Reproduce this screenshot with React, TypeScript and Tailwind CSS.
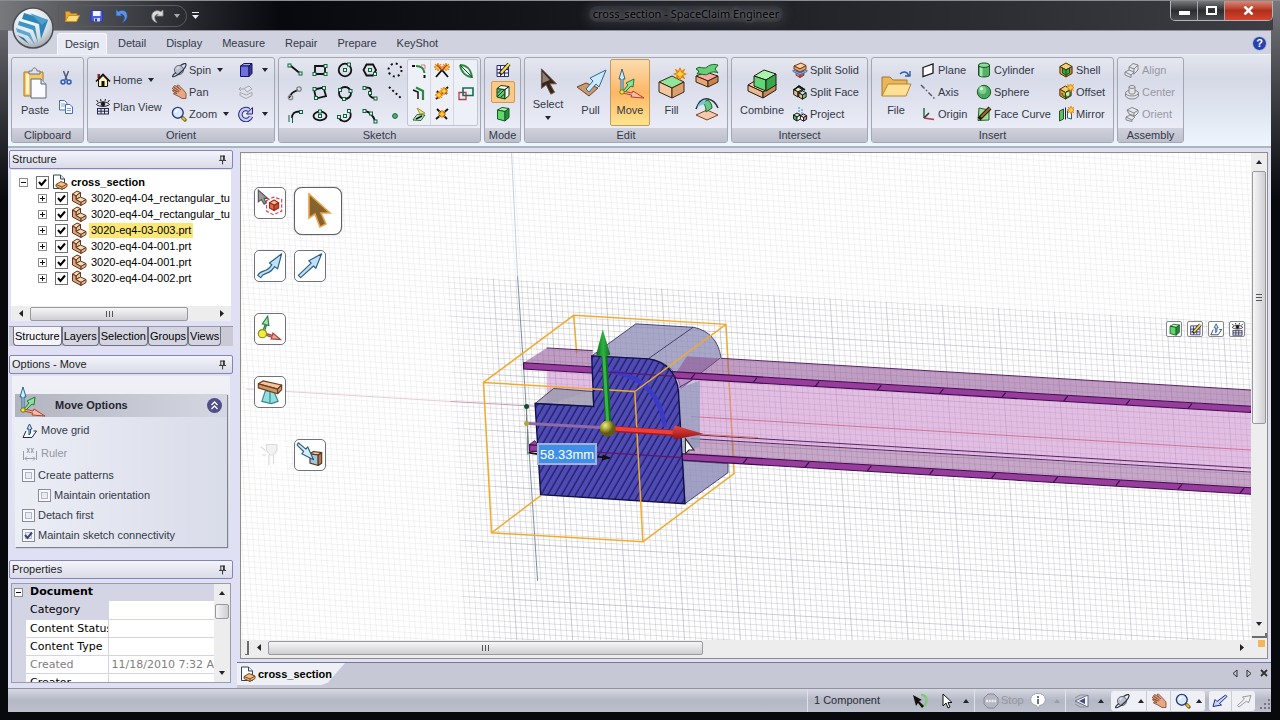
import type { ReactNode } from "react";
import { clsx } from "clsx";

type BoxProps = { x: number; y: number; r: number; top: string; left: string; right: string; stroke?: string };

// isometric box, (x, y) is the corner where the three faces meet
function Box({ x, y, r, top, left, right, stroke = "#1c1c1c" }: BoxProps) {
    const w = r * 0.87;
    const h = r / 2;
    return (
        <g stroke={stroke} strokeLinejoin="round">
            <polygon fill={top} points={`${x},${y} ${x + w},${y - h} ${x},${y - r} ${x - w},${y - h}`} />
            <polygon fill={left} points={`${x},${y} ${x - w},${y - h} ${x - w},${y + h} ${x},${y + r}`} />
            <polygon fill={right} points={`${x},${y} ${x + w},${y - h} ${x + w},${y + h} ${x},${y + r}`} />
        </g>
    );
}

function Node({ x, y }: { x: number; y: number }) {
    return <rect x={x - 1.5} y={y - 1.5} width="3" height="3" fill="#dff5e6" stroke="#14613f" />;
}

const star = (x: number, y: number) => (
    <path stroke="#e88200" fill="#ffd24a" strokeWidth=".8" transform={`translate(${x} ${y})`} d="M0 -4 L1 -1.4 3 -3 1.6 -.8 4 0 1.6 1 3 3 1 1.6 0 4 -1 1.6 -3 3 -1.6 1 -4 0 -1.6 -.8 -3 -3 -1 -1.4Z" />
);

const icons: Record<string, ReactNode> = {
    open: (
        <g strokeLinejoin="round">
            <path fill="#e9a92e" stroke="#b27a1c" d="M1.5 13.5v-10h4l1.500 2h6v3" />
            <path fill="#ffd97a" stroke="#c98f22" d="M1.500 13.500 4.500 7.500h11l-3 6z" />
        </g>
    ),
    save: (
        <g>
            <path fill="#4d5fe0" stroke="#2d3bb0" d="M2 2.500h11.500v11h-11.500z" />
            <path fill="#f4f6ff" d="M4 3h7.500v5H4z" />
            <path fill="#cfd6ff" d="M5 10h6v3.500H5z" /><path fill="#2d3bb0" d="M6 10.500h2v3H6z" />
        </g>
    ),
    undo: <path fill="#5f93df" stroke="#27509c" strokeWidth=".8" d="M2 8V1.500l2.500 2C8 1 13 2.500 13.300 7.500 13.500 11 11 14 8 14.500 10.500 12 11 9 9.500 7.300 8.500 6 7.300 6 6.500 6.300L8.500 8z" />,
    redo: <path fill="#dcdcdc" stroke="#8e8e8e" strokeWidth=".8" d="M14 8V2l-2.200 1.800C8.500 1.500 3 3 2.800 8 2.600 11.500 5 14 8 14.500 5.500 12 5 9 6.500 7.300 7.500 6.200 8.700 6 9.500 6.300L7.500 8z" />,
    cut: (
        <g fill="none" stroke="#2b5bb8" strokeWidth="1.500">
            <path stroke="#4c5a70" d="M5.500 1 9 10M10.500 1 7 10" />
            <circle cx="5" cy="12" r="2" /><circle cx="11" cy="12" r="2" />
        </g>
    ),
    copy: (
        <g fill="#f7faff" stroke="#4a6db5">
            <path d="M1.500 1.500h5l2.500 2.500v7h-7.500z" /><path d="M7.500 5.500h4.500l2.500 2.500v6.500h-7z" />
            <path stroke="#86a6df" d="M3 5h4M3 7h4M9 9.500h4M9 11.500h4" />
        </g>
    ),
    home: (
        <g>
            <path fill="#8c2222" d="M2.500 2h2.500v4H2.500z" />
            <path fill="#fdf3b5" stroke="#111" d="M3.500 8v6.500h9V8L8 3.500z" />
            <path fill="none" stroke="#111" strokeWidth="1.600" d="M1 9.500 8 2.500l7 7" />
            <path fill="#111" d="M6.500 9h3v5.500h-3z" />
        </g>
    ),
    plan: (
        <g fill="none" stroke="#16161e">
            <path d="M1.500 5.500C4 2 12 2 14.500 5.500 12 8 4 8 1.500 5.500M3 3 1.500 1M6 2 5.500 0M10 2l.5-2M13 3l1.500-2" />
            <circle cx="8" cy="5" r="1.800" fill="#16161e" />
            <path stroke="#26264d" d="M2.500 9v6M6 9v6M9.500 9v6M13.500 9v6M2 9.500h12M2 12.200h12M2 15h12" />
        </g>
    ),
    spin: (
        <g>
            <circle cx="8" cy="8" r="4.600" fill="#b9bcc9" stroke="#6a6f80" />
            <path fill="#e4e6ee" d="M5.500 6.500C6 5 8 4.500 9 5c-1 .5-2 1.500-2.500 3z" />
            <path fill="none" stroke="#2d3448" strokeWidth="1.200" d="M5 10.500C1 13.500.5 15.500 3.500 14.500 8 13 15 6 15 2.500 15 .5 12 1.800 9.500 3.500" />
        </g>
    ),
    pan: (
        <g stroke="#7c432c" strokeWidth=".8" strokeLinejoin="round">
            <path fill="#e6a783" d="M1 4.500 2.500 3.500 6 5.500 2.500 2.500 4 1.500 8 4.500 6 1.500 7.500 1 11.500 5l3.500 4v5.500h-4L7 12 2.500 10 3 8.800 6 9.500 1.500 7 2 6 6 7.500z" />
            <path fill="none" d="M6 5.500l2.500 1.500M8 4.500l2 1.500M6 7.500l2 .5" />
        </g>
    ),
    zoom: (
        <g>
            <path stroke="#8a6d16" strokeWidth="3.400" strokeLinecap="round" d="M11.500 11.500 14 14" /><path stroke="#edd04a" strokeWidth="1.400" d="M11.500 11.500 14 14" />
            <circle cx="6.800" cy="6.800" r="5.400" fill="#d9e9fb" stroke="#24407e" strokeWidth="1.400" />
            <path fill="#fff" d="M3.500 6C4 3.500 7 3 8.500 3.800 6.500 4.200 5.500 5.500 5 7z" />
        </g>
    ),
    views: (
        <g stroke="#17175a" strokeLinejoin="round">
            <path fill="#a9a9f4" d="M2.500 4 6 1.500h8L11 4z" /><path fill="#6f6fe0" d="M2.500 4H11v10.500H2.500z" /><path fill="#38389c" d="M11 4l3-2.500v10L11 14.500z" />
        </g>
    ),
    prevView: (
        <g fill="#e3e4ea" stroke="#a3a6b0">
            <path d="M2 8.500 8 11l6-2.500v3L8 14.500 2 11.500z" /><path d="M6 4.500 11 2l3 3-5 3z" /><path d="M1 5h5M3 3 1 5l2 2" />
        </g>
    ),
    rotate: (
        <g fill="none">
            <path stroke="#26267c" strokeWidth="4.500" d="M13 10.500A5.500 5.500 0 1 1 11 4" />
            <path fill="#c7cdf6" stroke="#26267c" d="M14.500 1.500v6.500h-6z" />
            <path stroke="#c7cdf6" strokeWidth="2.500" d="M13 10.500A5.500 5.500 0 1 1 11 4" />
        </g>
    ),
    line: <g><path stroke="#111" strokeWidth="1.800" d="M4 4 12 10.500" /><Node x={2.500} y={3.500} /><Node x={13.500} y={11.500} /></g>,
    rect: <g><path fill="none" stroke="#111" strokeWidth="1.800" d="M3 4h10v8H3z" /><Node x={2.500} y={12} /><Node x={13.500} y={4} /><Node x={13.500} y={12} /></g>,
    circle: <g><circle cx="8" cy="8" r="6.300" fill="none" stroke="#111" strokeWidth="1.800" /><Node x={8} y={8} /><Node x={12} y={2.500} /></g>,
    polygon: <g><path fill="none" stroke="#111" strokeWidth="1.800" d="M4.500 2.500h6.500l3 5.500-3 5.500H4.500L1.500 8z" /><Node x={8} y={8} /><Node x={13} y={12} /></g>,
    dashCircle: <circle cx="8" cy="8" r="6.500" fill="none" stroke="#111" strokeWidth="2" strokeDasharray="2 3.100" />,
    tangent: <g fill="none"><path stroke="#111" strokeWidth="1.800" d="M2 13C4 8 6 7 11 5" /><circle cx="3.500" cy="12.500" r="2.200" stroke="#888" strokeWidth="1.300" /><circle cx="12" cy="4" r="2.200" stroke="#888" strokeWidth="1.300" /></g>,
    rect3: <g><path fill="none" stroke="#111" strokeWidth="1.800" d="M2 4.500 11.500 2.500 14 11 4 13.500z" /><Node x={2.500} y={4} /><Node x={12} y={3} /><Node x={4} y={13} /></g>,
    circle3: <g><circle cx="8" cy="8" r="6" fill="none" stroke="#111" strokeWidth="1.800" /><Node x={3} y={5} /><Node x={13.500} y={6} /><Node x={7} y={14} /></g>,
    spline: <g><path fill="none" stroke="#111" strokeWidth="1.800" d="M3 3c5-1 7 1 5 4s1 6 5 6" /><Node x={2.500} y={3} /><Node x={8} y={8} /><Node x={13.500} y={13.500} /></g>,
    dashLine: <path stroke="#111" strokeWidth="2" strokeDasharray="2 2.600" d="M2 2 15 14" />,
    sweepArc: <g><path fill="none" stroke="#111" strokeWidth="1.800" d="M5 10C5 5 8 3.500 13 3.500" /><path stroke="#14613f" d="M2 7v7M5.500 9v6" /><Node x={14} y={4} /></g>,
    ellipse: <g><ellipse cx="8" cy="8" rx="6.500" ry="4.300" fill="none" stroke="#111" strokeWidth="1.800" /><Node x={8} y={8} /><Node x={8} y={3.500} /></g>,
    arc3: <g><path fill="none" stroke="#111" strokeWidth="1.800" d="M13 4a6 6 0 1 1-11 6" /><Node x={8} y={8} /><Node x={2} y={9} /><Node x={12} y={3} /></g>,
    curve: <g><path fill="none" stroke="#111" strokeWidth="1.800" d="M3 3c5 1 8 4 10 10" /><Node x={2.500} y={3} /><Node x={9} y={5.500} /><Node x={13.500} y={13.500} /></g>,
    point: <circle cx="8" cy="8" r="2.400" fill="#55b06d" stroke="#14613f" />,
    fillet: <g fill="none" strokeWidth="2"><path stroke="#2c8a43" d="M5 3c5 0 8 2 8.500 7" /><path stroke="#111" d="M1 3h3M13.500 12v3" /><path stroke="#d77" strokeWidth="1" d="M10 2h4v4" /></g>,
    offsetCurve: <g fill="none"><path stroke="#111" strokeWidth="1.500" d="M2 5l5 2v7" /><path stroke="#2c8a43" strokeWidth="2.200" d="M5 2.500 12 6v9" /></g>,
    projectSketch: <g><path fill="#e9e28c" stroke="#a09a30" d="M6 2l8 5-5 1z" /><path fill="#bfe8c2" stroke="#246b36" d="M2 14 6 8.500l8 .5-4 5.500z" /><path stroke="#111" strokeWidth="1.400" d="M5 13l6-3" /></g>,
    trim: <g><path stroke="#111" strokeWidth="1.800" d="M2 14 8 7l6 7" fill="none" />{star(4, 4)}{star(12, 4)}<path stroke="#c33a12" strokeWidth="1.400" d="M3 2l5 5 5-5" fill="none" /></g>,
    split: <g><path stroke="#111" strokeWidth="1.800" d="M2 14 14 2M3 6l4 4M9 5l4 4" />{star(5, 10)}{star(10, 6)}</g>,
    corner: <g><path stroke="#111" strokeWidth="1.800" d="M2 13 14 3M3 3l10 10" />{star(8, 8)}</g>,
    bend: <g fill="none" stroke="#2c8a43" strokeWidth="1.800"><path d="M2 2c6 0 11 4 12 12C8 14 3 9 2 2" /><path stroke="#164c24" strokeWidth="1" d="M2 2l12 12" /></g>,
    scale: <g fill="none"><path stroke="#b23d4e" strokeWidth="1.300" d="M1 7.500h7v7H1z" /><path stroke="#186b52" strokeWidth="1.600" d="M5 3h10v7.500H5z" /></g>,
    sketchMode: (
        <g>
            <path fill="#eef0ff" stroke="#2b2b66" d="M2 3.500h11.500v11H2z" /><path stroke="#2b2b66" d="M5.500 4v10M9.500 4v10M2 7.500h11M2 11h11" />
            <path stroke="#1e1e1e" strokeWidth="4" d="M5 12 14 2" /><path stroke="#f2dc4d" strokeWidth="2.400" d="M6 11l8-9" />
        </g>
    ),
    sectionMode: (
        <g>
            <path fill="#5fc96f" stroke="#123b1b" d="M2 4.500 10 5.500V15L2 13z" />
            <path fill="#fff" stroke="#123b1b" strokeLinejoin="round" d="M2 4.500 6 1.500l8 1-4 3zM14 2.500v9L10 15V5.500z" />
            <path stroke="#123b1b" d="M2.500 9 6 5.500M2.500 12.500 9 6M5.500 13.500 9.500 10" />
        </g>
    ),
    solidMode: (
        <g stroke="#12581f" strokeLinejoin="round">
            <path fill="#b6f3b6" d="M2.500 4 7 1.500l7 1L10 5.500z" /><path fill="#5fd86c" d="M2.500 4 10 5.500V15L2.500 13z" /><path fill="#24913a" d="M14 2.500v9L10 15V5.500z" />
        </g>
    ),
    splitSolid: <g><Box x={8} y={11} r={4.500} top="#f4a0a0" left="#e67b7b" right="#b84f50" stroke="#8a3434" /><path fill="#a9cdf3" stroke="#4a77b5" d="M1 8l7 3 7-3v1.500L8 12.500 1 9.500z" /><path fill="#f8cfa6" stroke="#6d3d1c" d="M2 4 9 1l5 2.500-6 3.500z" /><path fill="#e3a273" stroke="#6d3d1c" d="M2 4v3l6 3 6-3V3.500L8 7z" /></g>,
    splitFace: <g><Box x={6} y={8} r={5} top="#d8efb4" left="#eab988" right="#b67a4c" /><Box x={10.500} y={11} r={4.200} top="#bfe0f5" left="#eab988" right="#7ebf6e" /><path stroke="#111" strokeWidth="1.600" d="M2 6l5-4 6 4" fill="none" /></g>,
    project: <g><path stroke="#3f8ad0" d="M7 1v8M10 3v5" strokeDasharray="2 1" /><Box x={5} y={11} r={4} top="#bdf0be" left="#47b95a" right="#fff" /><Box x={11.500} y={11.500} r={3.600} top="#f6c7d1" left="#fff" right="#e0859b" /></g>,
    plane: <path fill="#fff" stroke="#16161e" strokeWidth="1.300" d="M3 5.500 13 2v9L3 14.500z" />,
    axis: <path stroke="#585b68" strokeWidth="1.500" strokeDasharray="5 2 1.500 2" d="M1 1 15 15" />,
    origin: <g strokeWidth="1.600"><path stroke="#2a7b46" d="M4 2v10" /><path stroke="#333" d="M4 12 9 7" /><path stroke="#b13a48" d="M4 12l10 1.500" /></g>,
    cylinder: <g stroke="#1d4d26"><path fill="#57b267" d="M2.500 3v10c0 2.600 11 2.600 11 0V3z" /><path fill="#a5e6ac" stroke="none" d="M4 5h2.500v9.500L4 14z" /><ellipse cx="8" cy="3.200" rx="5.500" ry="2.200" fill="#8fdc98" /></g>,
    sphere: <g><circle cx="8" cy="8" r="6.700" fill="#4aa860" stroke="#1d5a2a" /><circle cx="6.500" cy="6" r="4" fill="#7fce8b" /><circle cx="5.500" cy="4.800" r="1.700" fill="#cff3d2" /></g>,
    faceCurve: <g><path fill="#9fdc96" stroke="#23622d" d="M3 2l10 2v10L2 14.500z" /><path stroke="#26190b" strokeWidth="4" d="M3 13 14 2" /><path stroke="#9a6b24" strokeWidth="2" d="M5 11l9-9" /></g>,
    shell: <g><Box x={8} y={8} r={7} top="#f6cf78" left="#dfa03c" right="#c78428" stroke="#4e3008" /><path fill="#3aa84c" stroke="#134f1d" d="M8 8l3.500-2v5L8 13l-3.500-2V6zM8 8v4" /></g>,
    offset: <g><Box x={7.500} y={8.500} r={6.500} top="#f6cf78" left="#dfa03c" right="#c78428" stroke="#4e3008" /><path fill="#bff0b6" stroke="#134f1d" d="M7.500 8.500 12 6.500v5L7.500 14z" /><path stroke="#134f1d" fill="none" d="M4 9c0 3 2 4 5 3" />{star(12.500, 3.500)}</g>,
    mirror: <g><path fill="#63bd5f" stroke="#1d5a2a" d="M1.500 5 5.500 3v10l-4 2z" /><path fill="#fff" stroke="#222" d="M7.500 1.500v12" /><path fill="#eef7f9" stroke="#25636b" d="M9.500 5l4-2v10l-4-1z" />{star(13, 4)}</g>,
    align: <g fill="#e6e6ea" stroke="#85878f" strokeLinejoin="round"><path d="M5 5 9 1.500l5 1.500v5l-4 4-5-1.500zM5 5l5 2 4-4M10 7v5" /><path d="M1 10 5 8l5 2-3 3zM1 10v3l6 2.500V13" /></g>,
    center: <g fill="#e4e4e8" stroke="#85878f"><path d="M1.500 9v3c2 4 11 4 13 0V9" /><ellipse cx="8" cy="9" rx="6.500" ry="3" /><path d="M5 3v6c1 1.500 5 1.500 6 0V3" /><ellipse cx="8" cy="3" rx="3" ry="1.500" /></g>,
    orient: <g fill="#e6e6ea" stroke="#85878f" strokeLinejoin="round"><path d="M3 4 8 1.500 14 4v3l-3 3-6-2zM3 4l7 3 4-3M10 7v3" /><path d="M2 11 6 9l5 2-3 3zM2 11v3l6 1.500V14" /></g>,
    doc: (
        <g>
            <path fill="#fff" stroke="#33415c" d="M1.500 1h7l4 4v9.500h-11z" /><path fill="#dfe6f5" stroke="#33415c" d="M8.500 1v4h4" />
            <path fill="#f2bb84" stroke="#7a481f" d="M4 10.500 9 7.500l6 2.500v2.500l-5 3-6-3z" /><path fill="none" stroke="#7a481f" d="M4 10.500l6 2.500 5-3M10 13v2.500" />
        </g>
    ),
    part: (
        <g stroke="#5a3420" strokeLinejoin="round">
            <path fill="#f6d6b6" d="M1.500 4 6 1l3.500 1.500L5 6z" />
            <path fill="#f0c59f" d="M5 6 9.500 2.500V7L5 9.500z" />
            <path fill="#f6d6b6" d="M5 9.500 9.500 7l5.500 2.500-5 3z" />
            <path fill="#dca47a" d="M1.500 4 5 6v3.500l5 3v3L1.500 11z" />
            <path fill="#efbd92" d="M10 12.500l5-3v3l-5 3z" />
        </g>
    ),
    moveGrid: <g><path fill="#f5f8ff" stroke="#222b3f" d="M4 8 1 14.500h9L14.500 8h-3" /><path fill="#cfe6f5" stroke="#24507c" d="M7 12V6H5L7.500 1 10 6H8.500v4z" /></g>,
    ruler: <g stroke="#9a9ca6"><path d="M1.500 5v9M14.500 5v9M3 12.500h10M5 10.500l-2 2 2 2M11 10.500l2 2-2 2" fill="none" /><path d="M5 2l2.500 5M7.500 2 5 7M9 2l2.500 5M11.500 2 9 7" /></g>,
    boxSelect: (
        <g>
            <path fill="#9b9b9b" stroke="#555" d="M2 1v10l2.500-2 2.500 4 1.500-1L7 8h3z" />
            <Box x={15.500} y={14} r={4.500} top="#f6bd92" left="#dc6e4e" right="#b94f35" stroke="#a02c1c" />
            <path fill="none" stroke="#e0444c" strokeDasharray="3 1.500" d="M9 10l6-3 7 2v10l-7 3-6-3z" />
        </g>
    ),
    bigCursor: <path fill="#86622c" stroke="#e9a14a" strokeWidth="1.600" d="M9 1v24l6-4 5 13 6-3-5-11h9z" />,
    curvedArrow: <path fill="#bfe0f5" stroke="#2b5f88" strokeLinejoin="round" d="M1.500 20c3-6 7-1 12-9l-2-1.500L22 1.500l-3.500 13-2.500-2c-5 8-9 4-12 9.500z" />,
    straightArrow: <path fill="#bfe0f5" stroke="#2b5f88" strokeLinejoin="round" d="M2 20 13 9.500l-2-2L22 1.500 17 14l-2-2L4 22z" />,
    anchor: (
        <g>
            <path fill="#a6e3b4" stroke="#2b7d46" d="M6 13 8 8 5.500 7.500 10 1l1 8-2-.5-1.500 5z" />
            <path fill="#f1a49b" stroke="#a1443c" d="M9 16l5 1.500.5-2L21 21l-8-.5.600-1.500-5-1.500z" />
            <circle cx="5.500" cy="16" r="3.500" fill="#f2ec3c" stroke="#8f8b16" />
        </g>
    ),
    fulcrum: (
        <g strokeLinejoin="round">
            <path fill="#93dfe0" stroke="#36898c" d="M8 11h7l4 9-6 2-8-2zM12 11v10" />
            <path fill="#f0c59f" stroke="#6d3d1c" d="M2 5 6 2.500 22 6l-3.500 3.500z" /><path fill="#d2966a" stroke="#6d3d1c" d="M2 5l16.500 4.500v4L2 8.500zM18.500 9.500 22 6v4l-3.500 3.500z" />
        </g>
    ),
    upTo: <g strokeLinejoin="round"><path fill="#f0c59f" stroke="#5d3a1e" d="M12 11l3-2 7 1-3 2z" /><path fill="#a6c6dc" stroke="#5d3a1e" d="M12 11l7 1v9l-7-2z" /><path fill="#b3794e" stroke="#5d3a1e" d="M22 10v9l-3 2v-9z" /><path fill="#d4eefa" stroke="#2b5f88" d="M2 1.500 8.500 7l1.500-2 5 11-10-5 1.500-2L1 3.500z" /></g>,
    ghost: <g stroke="#dcdcdc" fill="#f2f2f2"><path d="M9 3h9v5l-3 4h-3L9 8zM11 12v9M15 12v8" /><path d="M4 5l4 3M5 12h4" /></g>,
    selectBack: <g><path fill="none" stroke="#7fca75" strokeWidth="2.400" d="M8 2c7 0 7 9 2 11" /><path fill="#111" d="M0 2l9 5-3 1 5 5-2 2-4-5-2 3z" /></g>,
    pointer: <path fill="#fff" stroke="#111" d="M4 1v12l3-3 2 5 2-1-2-4.500h4z" />,
    stop: <g><path fill="#b5b7c2" stroke="#888b97" d="M5 1h6l4 4v6l-4 4H5l-4-4V5z" /><path stroke="#eee" strokeWidth="2.500" d="M3 8h10" strokeDasharray="2 .8" /></g>,
    info: <g><path fill="#fff" stroke="#a3a6b2" d="M8 .5a6.500 6 0 0 1 1.500 12L8 16l-1.500-3.500A6.500 6 0 0 1 8 .5" /><path stroke="#6c6f7c" strokeWidth="2" d="M8 3v2M8 6v5" /></g>,
    viewBack: <g><path fill="#f4f5fa" stroke="#6e7186" d="M1 8 14 2v12z" /><path fill="#444b8c" d="M5 8l6-3v6z" /><path stroke="#8b8ea0" fill="none" d="M1 5l5-3h6M1 11l5 3h6" /></g>,
    arrowBack: <path fill="#c9d5fb" stroke="#1f2d86" strokeLinejoin="round" d="M1 13.500 3 6.500l2 2L13.500 2 15 3.500 7.500 10.500l2 1.500z" />,
    arrowFwd: <path fill="#f2f2f2" stroke="#999" strokeLinejoin="round" d="M15 2.500 12.500 10l-2-2L3 14l-1.500-1.500L8.500 6l-2-2z" />,
    pin: <path fill="none" stroke="#1d1d1d" d="M5.500 3v5M9.500 3v5M5 3.500h5M3.500 8.500h8M7.500 9v4M8.500 3v5" />,
    // 32px icons
    paste: (
        <g strokeLinejoin="round">
            <path fill="#f4c968" stroke="#a3762a" d="M5 5h19v24H5z" /><path fill="#fff4cf" d="M7 7h3v20H7z" />
            <path fill="#dfe1e8" stroke="#70737f" d="M10 7V4h3c0-4 5-4 5 0h3v3z" />
            <path fill="#fbfcff" stroke="#5d6678" d="M12 12h10l5 5v14H12z" /><path fill="#d5daea" stroke="#5d6678" d="M22 12v5h5" />
        </g>
    ),
    select: <g><path fill="#3a2419" stroke="#6b5447" d="M9 3v21l5-4 5 10 4-2-5-9h7z" /><path fill="#c4bdb8" d="M10 6v12l8-3z" opacity=".6" /></g>,
    pull: <g strokeLinejoin="round"><path fill="#c99a6f" stroke="#704322" d="M2 20l9-4 12 5-9 8z" /><path fill="#cdeafa" stroke="#31668f" d="M11 22l7-8-3-3L31 3 24 20l-3-3-7 8z" /></g>,
    move: (
        <g strokeLinejoin="round">
            <path fill="#cdeafa" stroke="#2c668c" d="M7 24V12H5L8 2l3 10H9v12z" />
            <path fill="#8fe0a0" stroke="#1f7b37" d="M9 24l5-6-2-2 8-4-1 8-2-1-6 6z" />
            <path fill="#f8b9a6" stroke="#b0432e" d="M9 24l9 2 1-2L30 31l-13-1 .6-2L9 26z" />
            <circle cx="8" cy="25" r="2.200" fill="#f3e63c" stroke="#7b7415" />
        </g>
    ),
    fill: (
        <g strokeLinejoin="round" stroke="#3c2414">
            <path fill="#8ee59b" d="M3 15 16 9l12 6-12 6z" /><path fill="#f2c7a2" d="M3 15l13 6v10L3 25z" /><path fill="#dca06f" d="M28 15 16 21v10l12-6z" />
            <g transform="translate(24 7) scale(1.500)">{star(0, 0)}</g>
        </g>
    ),
    blend: (
        <g strokeLinejoin="round" stroke="#3c2414">
            <path fill="#f8a9a4" d="M3 15l10-4 12 4-10 5z" /><path fill="#e3a878" d="M3 15l12 5v6L3 21z" /><path fill="#c9834f" d="M25 15 15 20v6l10-5z" />
            <path fill="#67cf76" stroke="#17602a" d="M3 8c4-4 7 1 11-2s7-3 11-2l-3 4 3 4c-4-2-7-1-10 1s-8-1-11 0l2-3z" />
        </g>
    ),
    tweak: (
        <g strokeLinejoin="round">
            <path fill="#f6c9ac" stroke="#7d4427" d="M3 21 14 16l11 5-11 5z" />
            <path fill="none" stroke="#23323f" strokeWidth="1.500" d="M3 15C6 7 10 4 15 5s8 4 10 9" />
            <path fill="#66c985" stroke="#175f2c" d="M14 6c3 1 5 4 5 8l-6 4c0-5-1-7-3-9z" /><path fill="#7ac6dd" d="M4 13c2-4 4-6 7-7l2 3z" />
        </g>
    ),
    combine: (
        <g stroke="#221a14" strokeLinejoin="round">
            <path fill="#f6d3b2" d="M2 18 12 12l18 5-13 8z" /><path fill="#eab98e" d="M2 18l15 7v6L2 24z" /><path fill="#c98956" d="M30 17l-13 8v6l13-8z" />
            <path fill="#a9f5b0" d="M8 9 18 3l12 4-10 6z" /><path fill="#60d674" d="M8 9l12 4v11L8 19z" /><path fill="#35a74b" d="M30 7v11l-10 6V13z" />
        </g>
    ),
    file: <g strokeLinejoin="round"><path fill="#e9b65c" stroke="#a3762a" d="M2 29V10h8l3 3h14v7" /><path fill="#ffdf94" stroke="#b8862f" d="M2 29l6-12h23l-5 12z" /><path fill="none" stroke="#2f5da8" strokeWidth="1.400" d="M20 7c3-3 7-3 9 2M30 4v5h-5" /></g>,
};

function Icon({ name, size = 16, box = 16, className }: { name: string; size?: number; box?: number; className?: string }) {
    return (
        <svg width={size} height={size} viewBox={`0 0 ${box} ${box}`} className={clsx("shrink-0", className)} aria-hidden="true">
            {icons[name]}
        </svg>
    );
}

function Caret({ up, dim }: { up?: boolean; dim?: boolean }) {
    return (
        <svg width="6" height="4" viewBox="0 0 6 4" className="shrink-0" aria-hidden="true">
            <path fill={dim ? "#9a9daa" : "#23252e"} d={up ? "M0 4 3 0l3 4z" : "M0 0h6L3 4z"} />
        </svg>
    );
}

function Group({ label, className, children }: { label: string; className: string; children: ReactNode }) {
    return (
        <section aria-label={label} className={clsx("flex h-[86px] shrink-0 flex-col rounded-[3px] border border-[#a4a6b4] bg-linear-to-b from-[#e5e7f0] via-[#d8dbe8] via-25% to-[#eff1fb]", className)}>
            <div className="flex h-[70px] pt-px">{children}</div>
            <div className="flex h-[14px] items-center justify-center bg-linear-to-b from-[#cfd1dc] to-[#bdbfcc] leading-[14px]">{label}</div>
        </section>
    );
}

function Small({ icon, label, caret, dim }: { icon: string; label: string; caret?: boolean; dim?: boolean }) {
    return (
        <button className={clsx("flex h-[22px] items-center gap-[2px] whitespace-nowrap", dim && "text-[#9698a3]")}>
            <Icon name={icon} />
            <span>{label}</span>
            {caret && <span className="ml-[4px]"><Caret /></span>}
        </button>
    );
}

function Large({ icon, label, className, active, caret }: { icon: string; label: string; className: string; active?: boolean; caret?: boolean }) {
    return (
        <button className={clsx("flex h-[67px] flex-col items-center rounded-[2px] border", caret ? "gap-px pt-[6px]" : "gap-[4px] pt-[7px]", active ? "border-[#c49a5c] bg-linear-to-b from-[#fbdcae] via-[#fcb765] via-50% to-[#fee48f]" : "border-transparent", className)}>
            <Icon name={icon} size={caret ? 30 : 32} box={32} />
            <span className="leading-[14px]">{label}</span>
            {caret && <span className="mt-[4px]"><Caret /></span>}
        </button>
    );
}

const sketchTools = [
    ["line", "rect", "circle", "polygon", "dashCircle"],
    ["tangent", "rect3", "circle3", "spline", "dashLine"],
    ["sweepArc", "ellipse", "arc3", "curve", "point"],
];
const sketchEdit = [
    ["fillet", "offsetCurve", "projectSketch"],
    ["trim", "split", "corner"],
    ["bend", "scale"],
];

function Ribbon() {
    return (
        <div className="flex h-[94px] shrink-0 gap-[3px] border-t border-b-2 border-t-[#eef0f6] border-b-[#a9b6bb] bg-linear-to-b from-[#e3e6ef] via-[#d4d8e5] via-25% to-[#edf5fd] px-[3px] pt-[2px]">
            <Group label="Clipboard" className="w-[73px]">
                <Large icon="paste" label="Paste" className="w-[46px]" />
                <div className="flex flex-col gap-[13px] pt-[11px]">
                    <button aria-label="Cut"><Icon name="cut" /></button>
                    <button aria-label="Copy"><Icon name="copy" /></button>
                </div>
            </Group>
            <Group label="Orient" className="w-[188px]">
                <div className="flex w-[80px] flex-col gap-[5px] pt-[10px] pl-[7px]">
                    <Small icon="home" label="Home" caret />
                    <Small icon="plan" label="Plan View" />
                </div>
                <div className="flex w-[70px] flex-col pl-[3px]">
                    <Small icon="spin" label="Spin" caret />
                    <Small icon="pan" label="Pan" />
                    <Small icon="zoom" label="Zoom" caret />
                </div>
                <div className="flex flex-col">
                    <button aria-label="Views" className="flex h-[22px] items-center gap-[8px]"><Icon name="views" /><Caret /></button>
                    <button aria-label="Previous view" className="flex h-[22px] items-center"><Icon name="prevView" /></button>
                    <button aria-label="Rotate" className="flex h-[22px] items-center gap-[8px]"><Icon name="rotate" /><Caret /></button>
                </div>
            </Group>
            <Group label="Sketch" className="w-[203px]">
                <div className="grid grid-cols-5 pl-[3px]">
                    {sketchTools.flat().map((t) => (
                        <button key={t} aria-label={t} className="flex h-[22px] w-[25px] items-center justify-center"><Icon name={t} /></button>
                    ))}
                </div>
                <div className="flex h-[67px] divide-x divide-[#d3d5e0] rounded-[2px] border border-[#c3c5d0] bg-[#eef0f8]">
                    {sketchEdit.map((col) => (
                        <div key={col[0]} className="flex w-[23px] flex-col">
                            {col.map((t) => <button key={t} aria-label={t} className="flex h-[22px] items-center justify-center"><Icon name={t} /></button>)}
                        </div>
                    ))}
                </div>
            </Group>
            <Group label="Mode" className="w-[37px]">
                <div className="flex w-full flex-col items-center">
                    <button aria-label="Sketch mode" className="flex h-[22px] w-[24px] items-center justify-center"><Icon name="sketchMode" /></button>
                    <button aria-label="Section mode" className="flex h-[22px] w-[24px] items-center justify-center rounded-[2px] border border-[#d39a4c] bg-[#fdc988]"><Icon name="sectionMode" /></button>
                    <button aria-label="3D mode" className="flex h-[22px] w-[24px] items-center justify-center"><Icon name="solidMode" /></button>
                </div>
            </Group>
            <Group label="Edit" className="w-[204px]">
                <Large icon="select" label="Select" caret className="w-[46px]" />
                <Large icon="pull" label="Pull" className="w-[39px]" />
                <Large icon="move" label="Move" active className="w-[40px]" />
                <Large icon="fill" label="Fill" className="w-[43px]" />
                <div className="flex flex-col gap-[5px] pt-[2px]">
                    <button aria-label="Blend"><Icon name="blend" size={28} box={28} /></button>
                    <button aria-label="Tweak"><Icon name="tweak" size={28} box={28} /></button>
                </div>
            </Group>
            <Group label="Intersect" className="w-[137px]">
                <Large icon="combine" label="Combine" className="w-[60px]" />
                <div className="flex flex-col">
                    <Small icon="splitSolid" label="Split Solid" />
                    <Small icon="splitFace" label="Split Face" />
                    <Small icon="project" label="Project" />
                </div>
            </Group>
            <Group label="Insert" className="w-[243px]">
                <Large icon="file" label="File" className="w-[48px]" />
                <div className="flex w-[56px] flex-col">
                    <Small icon="plane" label="Plane" />
                    <Small icon="axis" label="Axis" />
                    <Small icon="origin" label="Origin" />
                </div>
                <div className="flex w-[82px] flex-col">
                    <Small icon="cylinder" label="Cylinder" />
                    <Small icon="sphere" label="Sphere" />
                    <Small icon="faceCurve" label="Face Curve" />
                </div>
                <div className="flex flex-col">
                    <Small icon="shell" label="Shell" />
                    <Small icon="offset" label="Offset" />
                    <Small icon="mirror" label="Mirror" />
                </div>
            </Group>
            <Group label="Assembly" className="w-[67px]">
                <div className="flex flex-col pl-[6px]">
                    <Small icon="align" label="Align" dim />
                    <Small icon="center" label="Center" dim />
                    <Small icon="orient" label="Orient" dim />
                </div>
            </Group>
        </div>
    );
}

function Logo() {
    return (
        <svg width="42" height="42" viewBox="0 0 42 42" className="absolute top-[7px] left-[12px] z-10" aria-label="SpaceClaim">
            <defs>
                <radialGradient id="orb" cx=".4" cy=".25" r=".9"><stop offset="0" stopColor="#fff" /><stop offset=".6" stopColor="#d5dbe1" /><stop offset="1" stopColor="#7f858c" /></radialGradient>
            </defs>
            <circle cx="21" cy="21" r="20" fill="url(#orb)" stroke="#4b4f55" strokeWidth="1.500" />
            <path fill="#2a86b8" d="M12 6l24 7-7 19-2-15-17-5z" />
            <path fill="#4f9ecb" d="M18 6l18 7-6 5z" />
            <path fill="#3b95c6" d="M7 14l16 5 3 17-5-13-15-5z" />
            <path fill="#58a9d3" d="M4 21l14 5 5 12-7-9-11-4z" />
            <path fill="#2a6f9f" d="M5 28l7 3 5 6-7-5z" />
        </svg>
    );
}

function TitleBar() {
    return (
        <header className="flex h-[29px] items-start bg-linear-to-r from-[#77797c] via-[#07090f] via-22% to-[#3c3e43]">
            <div className="flex h-[29px] w-[202px] shrink-0 items-center pl-[58px]">
                <div className="flex h-[22px] items-center gap-[9px] rounded-r-full border border-[#5a5b5f] pr-[6px] pl-[5px]">
                    <button aria-label="Open"><Icon name="open" /></button>
                    <button aria-label="Save"><Icon name="save" /></button>
                    <button aria-label="Undo"><Icon name="undo" /></button>
                    <button aria-label="Redo" className="ml-[10px]"><Icon name="redo" /></button>
                    <svg width="6" height="4" viewBox="0 0 6 4" aria-hidden="true"><path fill="#aaa" d="M0 0h6L3 4z" /></svg>
                </div>
                <button aria-label="Customize toolbar" className="ml-[4px]">
                    <svg width="9" height="9" viewBox="0 0 9 9"><path stroke="#eee" d="M1 1.500h7" /><path fill="#eee" d="M1 4h7L4.500 8z" /></svg>
                </button>
            </div>
            <div className="flex flex-1 justify-center pt-[5px]">
                <h1 className="rounded-full bg-[#43454b]/60 px-[4px] font-['Noto_Sans',sans-serif] text-[11px] leading-[16px] text-[#020203] shadow-[0_0_8px_4px_#43454b66] [text-shadow:0_0_5px_#a5a7aa]">cross_section - SpaceClaim Engineer</h1>
            </div>
            <div className="flex h-[20px] shrink-0 divide-x divide-[#a3a3a8] overflow-hidden rounded-b-[5px] border border-t-0 border-[#b4b5ba]">
                <button aria-label="Minimize" className="flex w-[27px] items-center justify-center bg-linear-to-b from-[#77797d] via-[#2b2d31] via-50% to-[#4b4d52]"><span className="mt-[4px] h-[4px] w-[11px] bg-white" /></button>
                <button aria-label="Maximize" className="flex w-[27px] items-center justify-center bg-linear-to-b from-[#77797d] via-[#2b2d31] via-50% to-[#4b4d52]"><span className="h-[9px] w-[11px] border-2 border-white" /></button>
                <button aria-label="Close" className="flex w-[47px] items-center justify-center bg-linear-to-b from-[#d98878] via-[#b22d1b] via-50% to-[#d1462d]">
                    <svg width="11" height="9" viewBox="0 0 11 9"><path stroke="#fff" strokeWidth="2.500" d="M1.500.5l8 8M9.500.5l-8 8" /></svg>
                </button>
            </div>
        </header>
    );
}

function RibbonTabs() {
    const tabs = ["Detail", "Display", "Measure", "Repair", "Prepare", "KeyShot"];
    return (
        <nav className="flex h-[24px] shrink-0 items-end border-t border-[#8f9199] bg-[#d0d2df] pl-[49px]">
            <button className="h-[21px] w-[50px] rounded-t-[3px] border border-b-0 border-[#f6f8fb] bg-[#e8ebf4] text-center">Design</button>
            <div className="flex h-[21px] items-center gap-[20px] pl-[11px]">
                {tabs.map((t) => <button key={t}>{t}</button>)}
            </div>
            <button aria-label="Help" className="mr-[4px] mb-[3px] ml-auto flex size-[15px] items-center justify-center rounded-full border border-[#c9cdec] bg-[#2744a8] text-[11px] leading-none font-bold text-white">?</button>
        </nav>
    );
}

function PanelHeader({ title }: { title: string }) {
    return (
        <div className="flex h-[19px] shrink-0 items-center justify-between rounded-[2px] border border-[#8584b4] bg-linear-to-b from-[#f3f4fb] to-[#d9dbe7] px-[2px] text-[#1c1d26]">
            <h2>{title}</h2>
            <button aria-label={`Pin ${title}`}><Icon name="pin" size={14} /></button>
        </div>
    );
}

function Expander({ open }: { open?: boolean }) {
    return (
        <button aria-label={open ? "Collapse" : "Expand"} className="flex size-[9px] shrink-0 items-center justify-center border border-[#8b8c93] bg-white">
            <svg width="7" height="7" viewBox="0 0 7 7"><path stroke="#111" d={open ? "M1 3.500h5" : "M1 3.500h5M3.500 1v5"} /></svg>
        </button>
    );
}

function Check({ label, checked, flat }: { label: string; checked?: boolean; flat?: boolean }) {
    return (
        <span className="grid shrink-0">
            <input type="checkbox" aria-label={label} defaultChecked={checked} className={clsx("peer size-[13px] appearance-none border [grid-area:1/1]", flat ? "border-[#707178] bg-white" : "border-[#8a8c9c] bg-[#e9ebf3] shadow-[inset_0_0_0_2px_#f7f8fb,inset_0_0_0_3px_#b4b6c4]")} />
            <svg width="13" height="13" viewBox="0 0 13 13" className="pointer-events-none hidden [grid-area:1/1] peer-checked:block">
                <path fill="none" stroke={flat ? "#000" : "#3a4779"} strokeWidth="2" d="M3 6l2.500 3L10 3.500" />
            </svg>
        </span>
    );
}

const parts = [
    "3020-eq4-04_rectangular_tu",
    "3020-eq4-04_rectangular_tu",
    "3020-eq4-03-003.prt",
    "3020-eq4-04-001.prt",
    "3020-eq4-04-001.prt",
    "3020-eq4-04-002.prt",
];

function Structure() {
    return (
        <section>
            <PanelHeader title="Structure" />
            <div className="mx-[2px] mt-px flex h-[151px] flex-col overflow-hidden bg-white text-black">
                <div className="h-[136px] pt-[4px]">
                    <div className="flex h-[16px] items-center pl-[8px]">
                        <Expander open />
                        <span className="ml-[8px]"><Check label="cross_section" checked flat /></span>
                        <Icon name="doc" className="mx-[3px]" />
                        <b>cross_section</b>
                    </div>
                    {parts.map((p, i) => (
                        <div key={i} className="flex h-[16px] items-center pl-[27px] whitespace-nowrap">
                            <Expander />
                            <span className="ml-[8px]"><Check label={p} checked flat /></span>
                            <Icon name="part" className="ml-[3px]" />
                            <span className={clsx("ml-[2px] pl-[2px] leading-[15px]", i === 2 && "bg-[#fbe778] pr-[2px]")}>{p}</span>
                        </div>
                    ))}
                </div>
                <HScroll thumb="w-[158px]" />
            </div>
            <div className="mt-[5px] flex border-t border-[#9697a8] bg-[#c9cad6] pl-[4px]">
                {["Structure", "Layers", "Selection", "Groups", "Views"].map((t, i) => (
                    <button key={t} className={clsx("h-[19px] rounded-b-[4px] border border-t-0 border-[#6f7080] px-px text-black", i === 0 ? "bg-[#f3f3f9]" : "bg-[#d4d5e0]")}>{t}</button>
                ))}
            </div>
        </section>
    );
}

function HScroll({ thumb, split }: { thumb: string; split?: boolean }) {
    return (
        <div className="flex h-[15px] shrink-0 items-center bg-[#ededee]">
            {split && <span className="ml-[4px] h-[14px] w-[4px] border-r-2 border-b border-[#6d6d6d] bg-[#eee]" />}
            <button aria-label="Scroll left" className="flex w-[19px] justify-center"><svg width="4" height="7" viewBox="0 0 4 7"><path fill="#222" d="M4 0v7L0 3.500z" /></svg></button>
            <div className={clsx("flex h-[14px] items-center justify-center rounded-[2px] border border-[#98999d] bg-linear-to-b from-[#f6f6f7] to-[#cfcfd2]", thumb)}>
                {[0, 1, 2].map((g) => <span key={g} className="mx-px h-[6px] w-px bg-[#555]" />)}
            </div>
            <button aria-label="Scroll right" className="ml-auto flex w-[19px] justify-center"><svg width="4" height="7" viewBox="0 0 4 7"><path fill="#222" d="M0 0v7l4-3.500z" /></svg></button>
        </div>
    );
}

function VScroll({ thumb, grip }: { thumb: string; grip?: boolean }) {
    return (
        <div className="flex w-[16px] shrink-0 flex-col items-center bg-[#ededee]">
            <button aria-label="Scroll up" className="flex h-[18px] items-center"><Caret up /></button>
            <div className={clsx("flex w-[14px] flex-col items-center justify-center gap-[2px] rounded-[2px] border border-[#98999d] bg-linear-to-r from-[#f6f6f7] to-[#cfcfd2]", thumb)}>
                {grip && [0, 1, 2].map((g) => <span key={g} className="h-px w-[6px] bg-[#555]" />)}
            </div>
            <button aria-label="Scroll down" className="mt-auto flex h-[18px] items-center"><Caret /></button>
        </div>
    );
}

function Options() {
    return (
        <section className="mt-[9px]">
            <PanelHeader title="Options - Move" />
            <div className="mx-[3px] mt-[2px] bg-linear-to-b from-[#f0f1f6] to-[#dddfeb] px-[3px] pt-[18px] pb-[2px]">
                <div className="h-[153px] bg-linear-to-r from-[#eceef6] to-[#d9dce9] shadow-[1px_1px_1px_#80828e]">
                    <div className="flex h-[23px] items-end bg-linear-to-r from-[#b2b4bf] to-[#d5d7e3]">
                        <Icon name="move" size={32} box={32} />
                        <b className="ml-[8px] leading-[23px] text-[#25262e]">Move Options</b>
                        <button aria-label="Collapse" className="mr-[5px] mb-[4px] ml-auto flex size-[15px] items-center justify-center rounded-full bg-[#4e4f86]">
                            <svg width="9" height="9" viewBox="0 0 9 9"><path fill="none" stroke="#fff" strokeWidth="1.300" d="M1.500 4l3-3 3 3M1.500 8l3-3 3 3" /></svg>
                        </button>
                    </div>
                    <button className="mt-[2px] flex h-[23px] items-center gap-[3px] pl-[7px]"><Icon name="moveGrid" />Move grid</button>
                    <button className="flex h-[23px] items-center gap-[3px] pl-[7px] text-[#9496a2]"><Icon name="ruler" />Ruler</button>
                    <label className="flex h-[20px] items-center gap-[3px] pl-[7px]"><Check label="Create patterns" />Create patterns</label>
                    <label className="flex h-[20px] items-center gap-[3px] pl-[23px]"><Check label="Maintain orientation" />Maintain orientation</label>
                    <label className="flex h-[20px] items-center gap-[3px] pl-[7px]"><Check label="Detach first" />Detach first</label>
                    <label className="flex h-[20px] items-center gap-[3px] pl-[7px]"><Check label="Maintain sketch connectivity" checked />Maintain sketch connectivity</label>
                </div>
            </div>
        </section>
    );
}

const props = [["Category", ""], ["Content Status", ""], ["Content Type", ""], ["Created", "11/18/2010 7:32 AM"], ["Creator", ""]];

function Properties() {
    return (
        <section className="mt-[11px] flex min-h-0 flex-1 flex-col">
            <PanelHeader title="Properties" />
            <div className="mx-[2px] mt-[4px] flex min-h-0 flex-1 overflow-hidden border border-[#9a9cab] font-['DejaVu_Sans',sans-serif] text-[11px] text-black">
                <div className="min-w-0 flex-1 bg-[#d4d5e4]">
                    <div className="flex h-[17px] items-center gap-[7px] pl-[2px]">
                        <Expander open />
                        <b>Document</b>
                    </div>
                    <div className="pl-[14px]">
                        <table className="w-full table-fixed border-collapse bg-white">
                            <tbody>
                                {props.map(([k, v], i) => (
                                    <tr key={k} className="border-b border-[#d4d5e4]">
                                        <th className={clsx("h-[18px] w-[82px] overflow-hidden border-r border-[#d4d5e4] pl-[4px] text-left leading-[17px] font-normal whitespace-nowrap", i === 0 && "bg-[#d4d5e4]", k === "Created" && "text-[#808080]")}>{k}</th>
                                        <td className="overflow-hidden pl-[3px] leading-[17px] whitespace-nowrap text-[#808080]">{v}</td>
                                    </tr>
                                ))}
                            </tbody>
                        </table>
                    </div>
                </div>
                <VScroll thumb="h-[15px] mt-[2px]" />
            </div>
        </section>
    );
}

// the tubes run off to the right at this slope
const SLOPE = 0.0598;
const band = (x: number, top: number, height: number) => `${x},${top} 1700,${top + (1700 - x) * SLOPE} 1700,${top + height + (1700 - x) * SLOPE} ${x},${top + height}`;
const edge = (x: number, y: number) => `M${x} ${y}L1700 ${y + (1700 - x) * SLOPE}`;
const ticks = Array.from({ length: 16 }, (_, i) => 690 + i * 62);
const FRONT = "M534.500 403 593 406 591 355.500 648 358.500Q674 363 677.500 390L684 503 540 494Z";

function Scene() {
    return (
        <svg className="absolute inset-0 size-full" viewBox="241 153 1010 486" preserveAspectRatio="xMinYMin slice" role="img" aria-label="Section view of the model">
            <defs>
                <pattern id="fine" width="5.600" height="5.600" patternUnits="userSpaceOnUse" patternTransform="matrix(1 .058 .065 1 498.500 374)">
                    <path fill="none" stroke="#e1e1e6" strokeWidth=".8" d="M0 0h5.600M0 0v5.600" />
                </pattern>
                <pattern id="mid" width="5.600" height="5.600" patternUnits="userSpaceOnUse" patternTransform="matrix(1 .058 .065 1 498.500 374)">
                    <path fill="none" stroke="#4b4b5c" strokeOpacity=".26" strokeWidth=".8" d="M0 0h5.600M0 0v5.600" />
                </pattern>
                <pattern id="major" width="56" height="56" patternUnits="userSpaceOnUse" patternTransform="matrix(1 .058 .065 1 498.500 374)">
                    <path fill="none" stroke="#6c6f88" strokeOpacity=".4" strokeWidth="1" d="M0 0h56M0 0v56" />
                </pattern>
                <pattern id="hatch" width="6" height="6" patternUnits="userSpaceOnUse" patternTransform="rotate(30)">
                    <path stroke="#1a1a5c" strokeWidth="1.200" d="M1 0v6" />
                </pattern>
                <linearGradient id="gridFade" x1="0" x2="1"><stop offset="0" stopColor="#fff" stopOpacity=".3" /><stop offset=".06" stopColor="#fff" /><stop offset=".4" stopColor="#fff" stopOpacity=".8" /><stop offset="1" stopColor="#fff" stopOpacity=".5" /></linearGradient>
                <mask id="gridMask"><path fill="url(#gridFade)" d="M446 276 1700 349V1100H486z" /></mask>
                <linearGradient id="redCone" x1="0" x2="0" y1="0" y2="1"><stop offset="0" stopColor="#f0443e" /><stop offset="1" stopColor="#8e1414" /></linearGradient>
                <linearGradient id="greenCone"><stop offset="0" stopColor="#0f6d1c" /><stop offset=".5" stopColor="#30b243" /><stop offset="1" stopColor="#116a1d" /></linearGradient>
                <radialGradient id="ball" cx=".35" cy=".3"><stop offset="0" stopColor="#ece88a" /><stop offset=".5" stopColor="#b1a93c" /><stop offset="1" stopColor="#5f5a14" /></radialGradient>
            </defs>
            <rect x="241" y="153" width="1500" height="1000" fill="#fff" />
            <rect x="241" y="153" width="1500" height="1000" fill="url(#fine)" />
            <g mask="url(#gridMask)">
                <rect x="241" y="153" width="1500" height="1000" fill="url(#mid)" />
                <rect x="241" y="153" width="1500" height="1000" fill="url(#major)" />
            </g>
            <path fill="none" stroke="#c9d0d6" d="M511 153 517 276" />
            <path fill="none" stroke="#7d8fa0" d="M517 276 537 580" />
            <path stroke="#e6cfd5" d="M246 388.500 450 401" /><path stroke="#cf9bab" d="M450 401 540 406" />

            <path fill="none" stroke="#f0ab2c" strokeWidth="1.500" d="M483 382 573 315 725 324 733 473 642 541M573 315l3 38M491 532l49-37" />

            <path fill="#8b89b6" fillOpacity=".75" stroke="#2b2b5a" strokeWidth=".8" d="M591 355.500 635 323.500 693 327Q716 332 720 357L680 388Q674 362 648 358.500Z" />
            <g fill="#c77dc7" fillOpacity=".5">
                <polygon points="546,370 592,373 592,390 546,404" />
                <polygon points={band(676, 377.500, 60)} />
            </g>
            <polygon fill="#8d4f91" fillOpacity=".55" points="523,362.300 546,347.500 592,350.200 592,366.400" />
            <polygon fill="#8d4f91" fillOpacity=".55" points="686,355.900 1700,416.500 1700,432.700 676,371.400" />
            <polygon fill="#8d4f91" fillOpacity=".5" points={band(684, 438, 16)} />
            <path fill="none" stroke="#4a1458" strokeWidth=".9" d={"M546 347.500 592 350.200" + edge(720, 357.900) + edge(690, 434) + edge(690, 438)} />
            <polygon fill="#973d9c" stroke="#420a50" strokeWidth="1.100" points={band(523, 362.300, 6.300)} />
            <polygon fill="#973d9c" stroke="#420a50" strokeWidth="1.100" points={band(529, 444, 6.500)} />
            <polygon fill="#8d4f91" stroke="#420a50" strokeWidth=".8" points="529,444 534,440 538,444.500" />
            <g stroke="#420a50" strokeWidth="1.200">
                {ticks.map((x) => <path key={x} d={`M${x} ${368.500 + (x - 523) * SLOPE}l4-5M${x + 52} ${450 + (x + 52 - 529) * SLOPE}l4-5`} />)}
            </g>
            <path stroke="#c8628a" strokeWidth=".8" d={edge(690, 416)} />
            <path stroke="#dc7f67" d="M690 433 757 437" />

            <path fill="#9c9aae" fillOpacity=".85" stroke="#2b2b5a" strokeWidth=".8" d="M534.500 403 553 388 592 391 593 406Z" />
            <path fill="#8c98ba" fillOpacity=".7" d="M678 388 699 380V446L682 452Z" />
            <path fill="#8b89b6" fillOpacity=".8" stroke="#2b2b5a" strokeWidth=".8" d="M681.500 460 727 463V472L684 503Z" />
            <path stroke="#2b2b5a" fill="none" strokeWidth=".8" d="M648 358 692 327M678 387 692 379" />

            <path fill="#4f4ab4" d={FRONT} />
            <path fill="url(#hatch)" stroke="#11114a" strokeWidth="1.400" d={FRONT} />
            <path fill="none" stroke="#3a3ac6" strokeWidth="4.500" d="M611 371Q657 378 664 426" />
            <path stroke="#631469" strokeWidth="1.200" d="M540 448 682 457M598 371l77 5" />
            <path stroke="#8d6aa8" strokeWidth="3" d="M528 423 600 427" />
            <path fill="none" stroke="#f0ab2c" strokeWidth="1.500" d="M483 382 634 391 642 541 491 532ZM634 391 725 324" />

            <path stroke="#6c8370" d="M526 408v17M527 428v26" />
            <circle cx="526" cy="406" r="2.500" fill="#134c2b" />
            <circle cx="526" cy="423" r="2.500" fill="#b0a83a" />
            <path stroke="#111" strokeWidth="2" d="M528 452 537 453.500M597 456 609 457.500" />
            <path fill="#111" d="M610 457l-8-3-1 6z" />

            <path stroke="#0f6d1c" strokeWidth="6" d="M607.500 424 603.500 354" /><path stroke="#36b548" strokeWidth="3" d="M607 424 603 354" />
            <path fill="url(#greenCone)" d="M602 329 609.500 354Q602 358 595.500 354Z" />
            <path stroke="#a81a1a" strokeWidth="6" d="M612 428.500 674 432.500" /><path stroke="#f03d38" strokeWidth="4" d="M612 428 674 432" />
            <path fill="url(#redCone)" d="M703 433.500 674 425Q670 432 673 439Z" />
            <circle cx="607" cy="428" r="8" fill="url(#ball)" />
            <path fill="#fff" stroke="#222" d="M684.500 438v15l3.500-3.500h5z" />
        </svg>
    );
}

function CanvasTool({ icon, label, ghost }: { icon: string; label: string; ghost?: boolean }) {
    return (
        <button aria-label={label} className={clsx("flex size-[32px] items-center justify-center rounded-[5px] border", ghost ? "border-transparent bg-white/60" : "border-[#70717c] bg-white")}>
            <Icon name={icon} size={28} box={24} />
        </button>
    );
}

function Viewport() {
    return (
        <div className="flex min-h-0 flex-1 border border-[#8f8d84] bg-[#ededee]">
            <div className="flex min-w-0 flex-1 flex-col">
                <div className="relative min-h-0 flex-1 overflow-hidden">
                    <Scene />
                    <div className="absolute top-[34px] left-[13px] grid auto-rows-[32px] grid-cols-[32px_48px] gap-x-[8px] gap-y-[31px]">
                        <CanvasTool icon="boxSelect" label="Select component" />
                        <button aria-label="Select" className="flex size-[48px] items-center justify-center rounded-[8px] border border-[#5f6068] bg-white shadow-[0_0_1px_#5f6068]"><Icon name="bigCursor" size={36} box={36} /></button>
                        <CanvasTool icon="curvedArrow" label="Move along trajectory" />
                        <CanvasTool icon="straightArrow" label="Move direction" />
                        <div className="col-span-2"><CanvasTool icon="anchor" label="Anchor" /></div>
                        <div className="col-span-2"><CanvasTool icon="fulcrum" label="Fulcrum" /></div>
                        <CanvasTool icon="ghost" label="Ruler" ghost />
                        <CanvasTool icon="upTo" label="Up to" />
                    </div>
                    <div className="absolute top-[168px] right-[6px] flex gap-[5px]">
                        {["solidMode", "sketchMode", "moveGrid", "plan"].map((t) => (
                            <button key={t} aria-label={t} className="flex size-[16px] items-center justify-center rounded-[2px] border border-[#85868f] bg-white"><Icon name={t} size={13} /></button>
                        ))}
                    </div>
                    <input aria-label="Distance" defaultValue="58.33mm" className="absolute top-[290px] left-[296px] h-[22px] w-[60px] border-2 border-[#9fb4d8] bg-[#3f8fe8] px-px text-[13px] leading-[18px] text-white" />
                </div>
                <div className="pb-[3px]"><HScroll thumb="w-[435px]" split /></div>
            </div>
            <div className="flex w-[16px] flex-col">
                <div className="flex flex-1"><VScroll thumb="h-[253px]" grip /></div>
                <div className="mb-px ml-auto h-[5px] w-[15px] border-r-2 border-b-2 border-[#6d6d6d]" />
                <div className="mt-px mr-[2px] mb-[11px] ml-auto size-[7px] bg-[#f7b557]" />
            </div>
        </div>
    );
}

function DocTabs() {
    return (
        <div className="flex h-[26px] shrink-0 items-start border-t border-[#7475a0] bg-[#c6c8d5]">
            <button className="flex h-[22px] w-[108px] items-center gap-[2px] bg-[#eff0f6] pl-[3px] text-black [clip-path:polygon(0_0,100%_0,84%_90%,78%_100%,0_100%)]">
                <Icon name="doc" />
                <b>cross_section</b>
            </button>
            <div className="ml-auto flex h-[20px] items-center gap-[8px] pr-[3px]">
                <button aria-label="Previous tab"><svg width="6" height="9" viewBox="0 0 6 9"><path fill="none" stroke="#333" d="M5 1v7L1 4.500z" /></svg></button>
                <button aria-label="Next tab"><svg width="6" height="9" viewBox="0 0 6 9"><path fill="none" stroke="#333" d="M1 1v7l4-3.500z" /></svg></button>
                <button aria-label="Close tab"><svg width="8" height="8" viewBox="0 0 8 8"><path stroke="#333" strokeWidth="1.800" d="M1 1l6 6M7 1 1 7" /></svg></button>
            </div>
        </div>
    );
}

function StatusBar() {
    return (
        <footer className="flex h-[24px] shrink-0 items-center justify-end border-t border-[#9193a0] bg-linear-to-b from-[#d7d9e4] via-[#b4b7c4] via-50% to-[#bcbfcc] text-[#2b2e38]">
            <span className="flex h-full w-[106px] items-center border-l border-[#dfe1ea] pl-[6px]">1 Component</span>
            <button aria-label="Previous selection" className="w-[26px]"><Icon name="selectBack" /></button>
            <button aria-label="Selection mode" className="flex w-[35px] items-center gap-[8px]"><Icon name="pointer" /><Caret up /></button>
            <button className="flex h-full w-[56px] items-center gap-[2px] border-l border-[#dfe1ea] pl-[8px] text-[#94969f]"><Icon name="stop" />Stop</button>
            <button aria-label="Messages" className="flex w-[35px] items-center gap-[8px]"><Icon name="info" /><Caret up dim /></button>
            <button aria-label="Previous view" className="flex h-full w-[46px] items-center gap-[8px] border-l border-[#dfe1ea] pl-[8px]"><Icon name="viewBack" /><Caret up /></button>
            <div className="flex h-[20px] items-center divide-x divide-[#c9cbd6] rounded-[3px] bg-[#eef0f6]">
                <button aria-label="Spin" className="flex h-full w-[36px] items-center justify-center gap-[8px]"><Icon name="spin" /><Caret up /></button>
                <button aria-label="Pan" className="flex h-full w-[24px] items-center justify-center"><Icon name="pan" /></button>
                <button aria-label="Zoom" className="flex h-full w-[34px] items-center justify-center gap-[5px]"><Icon name="zoom" /><Caret up /></button>
            </div>
            <div className="ml-[4px] flex h-[20px] items-center divide-x divide-[#c9cbd6] rounded-[3px] bg-[#eef0f6]">
                <button aria-label="Back" className="flex h-full w-[23px] items-center justify-center"><Icon name="arrowBack" /></button>
                <button aria-label="Forward" className="flex h-full w-[23px] items-center justify-center"><Icon name="arrowFwd" /></button>
            </div>
            <svg width="12" height="12" viewBox="0 0 12 12" className="mt-[8px] ml-[4px]" aria-hidden="true"><path fill="#747786" d="M9 0h2v2H9zM5 4h2v2H5zM9 4h2v2H9zM1 8h2v2H1zM5 8h2v2H5zM9 8h2v2H9z" /></svg>
        </footer>
    );
}

export default function App() {
    return (
        <div className="relative flex h-screen flex-col overflow-hidden bg-linear-to-b from-[#77797d] via-[#07090d] via-28% to-[#07090d] font-['Liberation_Sans',Arial,sans-serif] text-[11px] text-[#333947]">
            <Logo />
            <div className="border-t border-[#8b8c90] pr-[7px]"><TitleBar /></div>
            <div className="mr-[9px] mb-[8px] ml-[8px] flex min-h-0 flex-1 flex-col bg-[#dfe0f3]">
                <RibbonTabs />
                <Ribbon />
                <div className="flex min-h-0 flex-1 pt-[2px]">
                    <aside className="flex w-[225px] shrink-0 flex-col pb-[5px] pl-px">
                        <Structure />
                        <Options />
                        <Properties />
                    </aside>
                    <main className="ml-[4px] flex min-w-0 flex-1 flex-col">
                        <div className="mr-[3px] mb-[3px] ml-[3px] flex min-h-0 flex-1 pt-[2px]"><Viewport /></div>
                        <DocTabs />
                    </main>
                </div>
                <StatusBar />
            </div>
        </div>
    );
}
